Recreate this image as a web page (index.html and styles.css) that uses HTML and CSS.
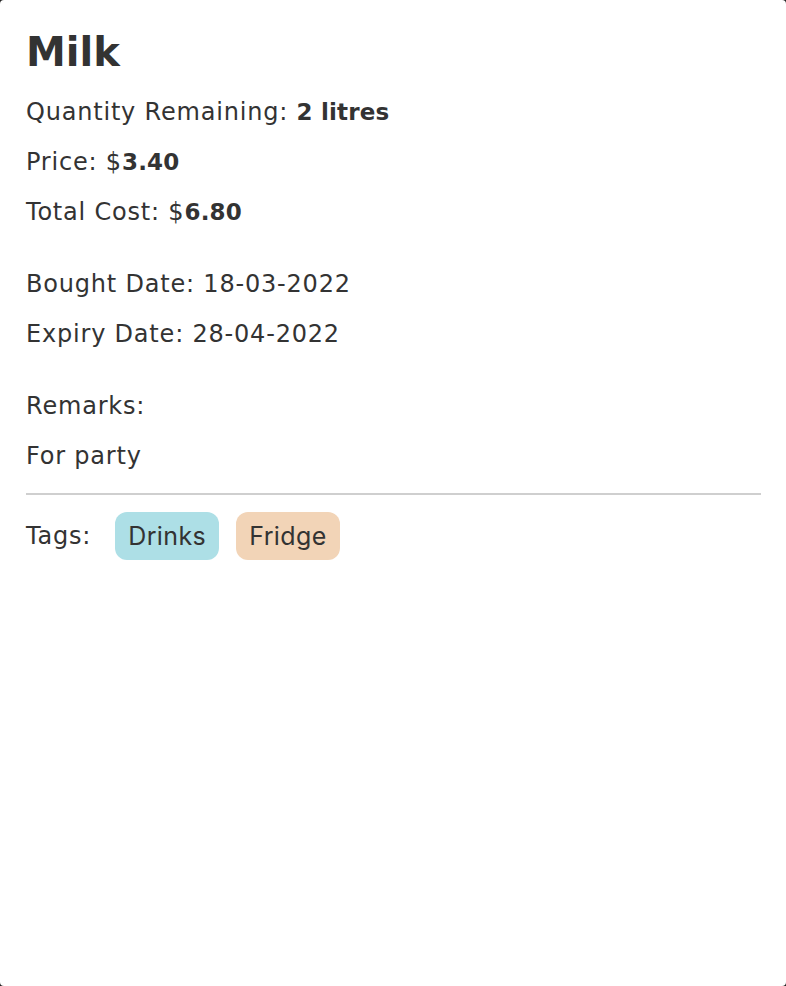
FILE: index.html
```html
<!DOCTYPE html>
<html>
<head>
<meta charset="utf-8">
<link rel="stylesheet" href="styles.css">
</head>
<body>
<div class="card">
  <h1 class="title">Milk</h1>
  <div class="group">
    <p class="line">Quantity Remaining: <b>2 litres</b></p>
    <p class="line">Price: $<b>3.40</b></p>
    <p class="line">Total Cost: $<b>6.80</b></p>
  </div>
  <div class="group">
    <p class="line">Bought Date: 18-03-2022</p>
    <p class="line">Expiry Date: 28-04-2022</p>
  </div>
  <div class="group">
    <p class="line">Remarks:</p>
    <p class="line">For party</p>
  </div>
  <hr class="divider">
  <div class="tags">
    <span class="tags-label">Tags:</span>
    <span class="chip chip-blue">Drinks</span>
    <span class="chip chip-peach">Fridge</span>
  </div>
</div>
</body>
</html>
```
FILE: styles.css
```css
html, body {
  margin: 0;
  padding: 0;
  height: 100%;
  background: #222;
}
.card {
  box-sizing: border-box;
  height: 100%;
  background: #fff;
  border-radius: 4px;
  padding: 28px 25px 0 26px;
  color: #333;
  font-family: "DejaVu Sans", sans-serif;
}
.title {
  margin: 0;
  font-family: "DejaVu Sans", sans-serif;
  font-weight: 700;
  font-size: 40px;
  line-height: 48px;
}
.group {
  margin-top: 22px;
  display: flex;
  flex-direction: column;
}
.title + .group {
  margin-top: 11px;
}
.line {
  margin: 0;
  font-size: 24px;
  line-height: 50px;
  letter-spacing: 0.8px;
  white-space: nowrap;
}
.line b {
  font-weight: 700;
  font-size: 23px;
  letter-spacing: 0.2px;
}
.divider {
  border: 0;
  height: 2px;
  background: #cfcfcf;
  margin: 12px 0 0 0;
}
.tags {
  display: flex;
  align-items: center;
  margin-top: 17px;
}
.tags-label {
  font-size: 24px;
  letter-spacing: 0.8px;
  margin-right: 24px;
}
.chip {
  font-family: "Inter", sans-serif;
  font-size: 25px;
  letter-spacing: 0.4px;
  height: 48px;
  display: inline-flex;
  align-items: center;
  padding: 0 13px;
  border-radius: 12px;
  margin-right: 17px;
  color: #333;
}
.chip-blue { background: #addfe6; }
.chip-peach { background: #f2d4b7; }
```
